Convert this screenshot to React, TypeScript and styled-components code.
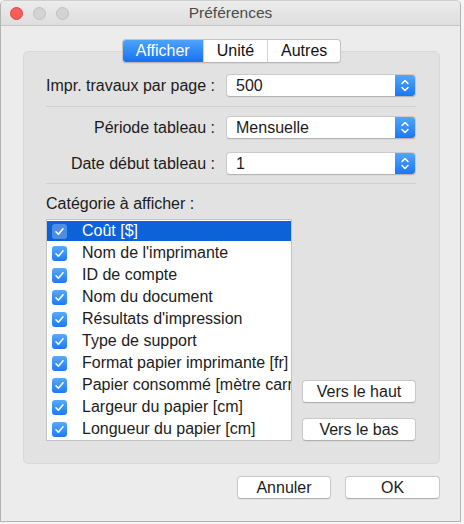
import React from "react";
import styled, { createGlobalStyle, css } from "styled-components";

const GlobalStyle = createGlobalStyle`
  html, body {
    margin: 0;
    padding: 0;
    background: #f5f5f5;
  }
  body {
    font-family: "Liberation Sans", Arial, sans-serif;
    font-size: 16px;
    color: #1c1c1c;
  }
`;

const Window = styled.div`
  width: 461px;
  height: 522px;
  box-sizing: border-box;
  background: #ececec;
  border: 1px solid #b3b3b3;
  border-top-color: #cfcfcf;
  border-radius: 5px 5px 0 0;
  display: flex;
  flex-direction: column;
  overflow: hidden;
`;

const TitleBar = styled.div`
  height: 24px;
  border-bottom: 1px solid #c6c6c6;
  background: linear-gradient(#ececec, #dedede);
  display: flex;
  align-items: center;
  position: relative;
`;

const Lights = styled.div`
  display: flex;
  gap: 10px;
  padding-left: 9px;
`;

const Light = styled.span<{ $red?: boolean }>`
  width: 13px;
  height: 13px;
  box-sizing: border-box;
  border-radius: 50%;
  ${({ $red }) =>
    $red
      ? css`
          background: #fc5b57;
          border: 1px solid #e0443f;
        `
      : css`
          background: #d3d3d3;
          border: 1px solid #c1c1c1;
        `}
`;

const Title = styled.div`
  position: absolute;
  left: 0;
  right: 0;
  text-align: center;
  font-size: 15.5px;
  color: #4b4b4b;
  pointer-events: none;
`;

const Body = styled.div`
  flex: 1;
  display: flex;
  flex-direction: column;
`;

const Tabs = styled.div`
  align-self: center;
  margin-top: 13px;
  margin-bottom: -12px;
  margin-left: 2px;
  height: 24px;
  box-sizing: border-box;
  display: flex;
  border: 1px solid #c4c4c4;
  border-bottom-color: #b5b5b5;
  border-radius: 4px;
  background: #fff;
  overflow: hidden;
  position: relative;
  z-index: 1;
  box-shadow: 0 1px 0 rgba(0, 0, 0, 0.05);
`;

const Tab = styled.div<{ $active?: boolean }>`
  padding: 0 13px;
  display: flex;
  align-items: center;
  font-size: 16px;
  color: #111;
  & + & {
    border-left: 1px solid #d6d6d6;
  }
  ${({ $active }) =>
    $active &&
    css`
      background: linear-gradient(#4da3fc, #1572f2);
      color: #fff;
    `}
`;

const Group = styled.div`
  margin-left: 22px;
  width: 417px;
  box-sizing: border-box;
  padding: 22px 23px 22px 22px;
  background: #e2e2e2;
  border: 1px solid #d9d9d9;
  border-radius: 5px;
  display: flex;
  flex-direction: column;
`;

const FormRow = styled.div<{ $gap?: number }>`
  display: grid;
  grid-template-columns: 169px 190px;
  column-gap: 11px;
  align-items: center;
  margin-top: ${({ $gap }) => $gap ?? 0}px;
`;

const Label = styled.div`
  text-align: right;
  white-space: nowrap;
  font-size: 16px;
`;

const Popup = styled.div`
  height: 23px;
  box-sizing: border-box;
  display: flex;
  background: #fff;
  border: 1px solid #cacaca;
  border-bottom-color: #b4b4b4;
  border-radius: 4px;
  overflow: hidden;
  box-shadow: 0 1px 0 rgba(0, 0, 0, 0.04);
`;

const PopupValue = styled.div`
  flex: 1;
  padding-left: 9px;
  display: flex;
  align-items: center;
  font-size: 16px;
`;

const PopupArrows = styled.div`
  width: 20px;
  display: flex;
  align-items: center;
  justify-content: center;
  background: linear-gradient(#52a6fd, #1a77f4);
`;

const Separator = styled.div<{ $top: number; $bottom: number }>`
  height: 1px;
  background: #d0d0d0;
  margin: ${({ $top, $bottom }) => `${$top}px 0 ${$bottom}px`};
`;

const SectionLabel = styled.div`
  font-size: 16px;
  line-height: 18px;
  margin-bottom: 6px;
`;

const ListArea = styled.div`
  display: flex;
  align-items: flex-end;
  gap: 10px;
`;

const List = styled.div`
  width: 246px;
  height: 222px;
  box-sizing: border-box;
  padding-top: 1px;
  background: #fff;
  border: 1px solid #c3c3c3;
  overflow: hidden;
  display: flex;
  flex-direction: column;
  gap: 2px;
`;

const Item = styled.div<{ $selected?: boolean }>`
  height: 20px;
  flex: none;
  display: flex;
  align-items: center;
  gap: 15px;
  padding-left: 5px;
  white-space: nowrap;
  font-size: 16px;
  ${({ $selected }) =>
    $selected &&
    css`
      background: #0b63d7;
      color: #fff;
    `}
`;

const Box = styled.span<{ $selected?: boolean }>`
  width: 15px;
  height: 15px;
  flex: none;
  border-radius: 3px;
  display: flex;
  align-items: center;
  justify-content: center;
  background: ${({ $selected }) =>
    $selected ? "rgba(255,255,255,0.28)" : "linear-gradient(#58aafd, #1c7af5)"};
`;

const SideButtons = styled.div`
  display: flex;
  flex-direction: column;
  gap: 15px;
`;

const Button = styled.button<{ $w: number }>`
  width: ${({ $w }) => $w}px;
  height: 23px;
  box-sizing: border-box;
  padding: 0;
  background: #fff;
  border: 1px solid #c8c8c8;
  border-bottom-color: #b0b0b0;
  border-radius: 4px;
  font-family: "Liberation Sans", Arial, sans-serif;
  font-size: 16px;
  color: #1c1c1c;
  box-shadow: 0 1px 0 rgba(0, 0, 0, 0.04);
`;

const Footer = styled.div`
  display: flex;
  justify-content: flex-end;
  gap: 14px;
  margin-top: 12px;
  padding-right: 20px;
`;

const Arrows = () => (
  <svg width="10" height="15" viewBox="0 0 10 15" fill="none">
    <path d="M2 5.5 L5 2.5 L8 5.5" stroke="#fff" strokeWidth="1.5" strokeLinecap="round" strokeLinejoin="round" />
    <path d="M2 9.5 L5 12.5 L8 9.5" stroke="#fff" strokeWidth="1.5" strokeLinecap="round" strokeLinejoin="round" />
  </svg>
);

const Check = () => (
  <svg width="11" height="11" viewBox="0 0 11 11" fill="none">
    <path d="M2 5.8 L4.4 8.2 L9 2.8" stroke="#fff" strokeWidth="1.6" strokeLinecap="round" strokeLinejoin="round" />
  </svg>
);

const categories = [
  "Coût [$]",
  "Nom de l'imprimante",
  "ID de compte",
  "Nom du document",
  "Résultats d'impression",
  "Type de support",
  "Format papier imprimante [fr]",
  "Papier consommé [mètre carré]",
  "Largeur du papier [cm]",
  "Longueur du papier [cm]",
];

const Select = ({ value }: { value: string }) => (
  <Popup>
    <PopupValue>{value}</PopupValue>
    <PopupArrows>
      <Arrows />
    </PopupArrows>
  </Popup>
);

export default function App() {
  return (
    <>
      <GlobalStyle />
      <Window>
        <TitleBar>
          <Lights>
            <Light $red />
            <Light />
            <Light />
          </Lights>
          <Title>Préférences</Title>
        </TitleBar>
        <Body>
          <Tabs>
            <Tab $active>Afficher</Tab>
            <Tab>Unité</Tab>
            <Tab>Autres</Tab>
          </Tabs>
          <Group>
            <FormRow>
              <Label>Impr. travaux par page :</Label>
              <Select value="500" />
            </FormRow>
            <Separator $top={9} $bottom={9} />
            <FormRow>
              <Label>Période tableau :</Label>
              <Select value="Mensuelle" />
            </FormRow>
            <FormRow $gap={13}>
              <Label>Date début tableau :</Label>
              <Select value="1" />
            </FormRow>
            <Separator $top={8} $bottom={11} />
            <SectionLabel>Catégorie à afficher :</SectionLabel>
            <ListArea>
              <List>
                {categories.map((c, i) => (
                  <Item key={c} $selected={i === 0}>
                    <Box $selected={i === 0}>
                      <Check />
                    </Box>
                    {c}
                  </Item>
                ))}
              </List>
              <SideButtons>
                <Button $w={114}>Vers le haut</Button>
                <Button $w={114}>Vers le bas</Button>
              </SideButtons>
            </ListArea>
          </Group>
          <Footer>
            <Button $w={94}>Annuler</Button>
            <Button $w={95}>OK</Button>
          </Footer>
        </Body>
      </Window>
    </>
  );
}
